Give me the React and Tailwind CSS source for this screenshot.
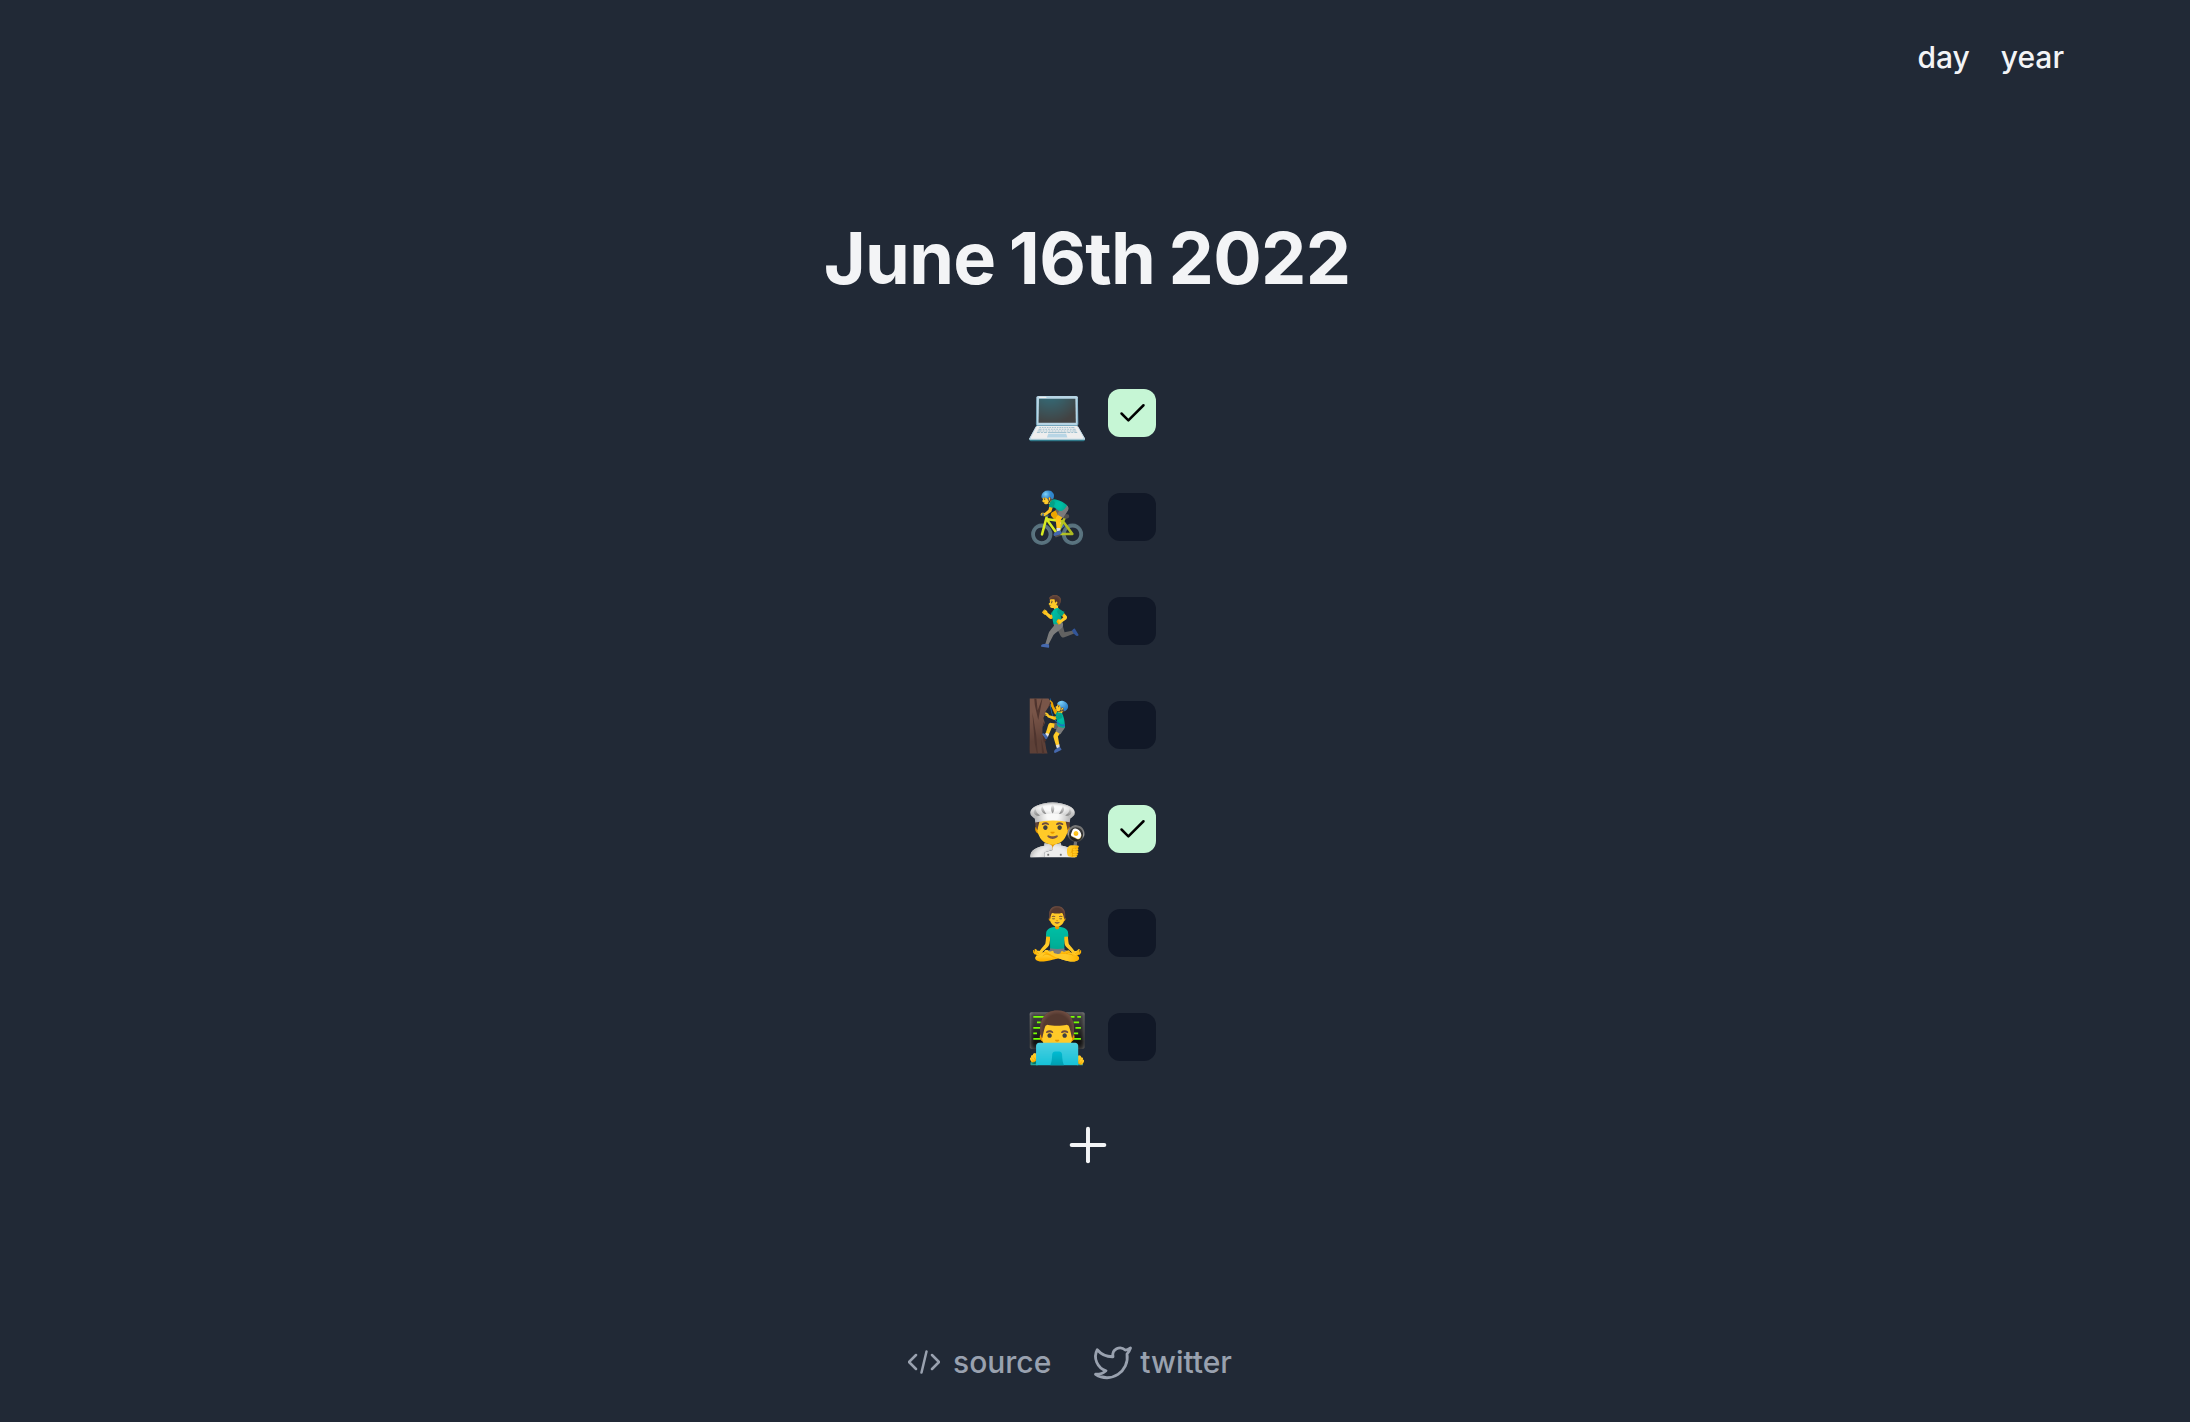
import { Plus, Check, Twitter } from "lucide-react";

const habits = [
  { emoji: "💻", done: true },
  { emoji: "🚴‍♂️", done: false },
  { emoji: "🏃‍♂️", done: false },
  { emoji: "🧗‍♂️", done: false },
  { emoji: "👨‍🍳", done: true },
  { emoji: "🧘‍♂️", done: false },
  { emoji: "👨‍💻", done: false },
];

export default function App() {
  return (
    <div className="min-h-[1422px] bg-[#212936] font-['Inter',sans-serif] text-gray-100 pr-[16px] flex flex-col">
      <nav className="flex justify-end gap-[31px] pt-[39px] pr-[110px] text-3xl font-medium">
        <a>day</a>
        <a>year</a>
      </nav>
      <h1 className="mt-[147px] text-center text-[72px] leading-none font-bold tracking-[-0.7px] [word-spacing:-3px]">June 16th 2022</h1>
      <div className="mt-[95px] flex flex-col items-center gap-[56px]">
        {habits.map((h, i) => (
          <div key={i} className="ml-[8px] flex items-center gap-[24px] h-[48px]">
            <span className="w-[58px] text-center text-[50px] leading-none">{h.emoji}</span>
            <span className={`flex h-[48px] w-[48px] items-center justify-center rounded-xl ${h.done ? "bg-[#c6f6d5]" : "bg-[#111827]"}`}>
              {h.done && <Check size={33} strokeWidth={1.8} color="#000" />}
            </span>
          </div>
        ))}
      </div>
      <div className="mt-[56px] ml-[1px] flex justify-center">
        <Plus size={56} strokeWidth={1.7} color="#f3f4f6" />
      </div>
      <footer className="mt-[168px] flex justify-center gap-[41px] pr-[34px] text-3xl font-medium text-gray-400">
        <a className="flex items-center gap-[13px]">
          <svg width="32" height="24" viewBox="0 0 32 24" fill="none" stroke="currentColor" strokeWidth="2.5" strokeLinecap="round" strokeLinejoin="round">
            <path d="M8 5l-7 7 7 7M24 5l7 7-7 7M18.5 1.5l-5 21" />
          </svg>
          source
        </a>
        <a className="flex items-center gap-[6px]">
          <Twitter size={42} strokeWidth={1.6} />
          twitter
        </a>
      </footer>
    </div>
  );
}
